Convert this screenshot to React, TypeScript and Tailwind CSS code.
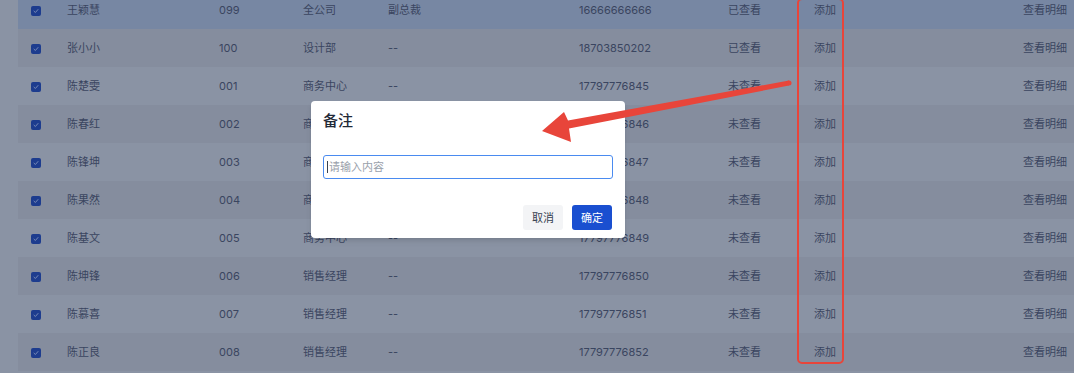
import React from 'react';

const ROWS = [
  { name: '王颖慧', code: '099', dept: '全公司', title: '副总裁', phone: '16666666666', status: '已查看' },
  { name: '张小小', code: '100', dept: '设计部', title: '--', phone: '18703850202', status: '已查看' },
  { name: '陈楚雯', code: '001', dept: '商务中心', title: '--', phone: '17797776845', status: '未查看' },
  { name: '陈春红', code: '002', dept: '商务中心', title: '--', phone: '17797776846', status: '未查看' },
  { name: '陈锋坤', code: '003', dept: '商务中心', title: '--', phone: '17797776847', status: '未查看' },
  { name: '陈果然', code: '004', dept: '商务中心', title: '--', phone: '17797776848', status: '未查看' },
  { name: '陈基文', code: '005', dept: '商务中心', title: '--', phone: '17797776849', status: '未查看' },
  { name: '陈坤锋', code: '006', dept: '销售经理', title: '--', phone: '17797776850', status: '未查看' },
  { name: '陈慕喜', code: '007', dept: '销售经理', title: '--', phone: '17797776851', status: '未查看' },
  { name: '陈正良', code: '008', dept: '销售经理', title: '--', phone: '17797776852', status: '未查看' },
];

const Check = () => (
  <span className="flex h-[10px] w-[10px] items-center justify-center rounded-[2px] bg-[#1d3c8e]">
    <svg width="6" height="6" viewBox="0 0 6 6" fill="none">
      <path d="M1 3.2 2.4 4.5 5 1.5" stroke="#8c9ac0" strokeWidth="0.8" strokeLinecap="round" strokeLinejoin="round" />
    </svg>
  </span>
);

const Row = ({ row, index }: { row: (typeof ROWS)[number]; index: number }) => {
  const bg = index === 0 ? 'bg-[#7787a3]' : index % 2 === 1 ? 'bg-[#858d9e]' : 'bg-[#8a93a4]';
  return (
    <div className={`flex h-[38px] items-center pl-[13px] pr-[7px] ${bg}`}>
      <div className="w-[36px] pt-px">
        <Check />
      </div>
      <div className="w-[152px]">{row.name}</div>
      <div className="w-[84px]">{row.code}</div>
      <div className="w-[85px]">{row.dept}</div>
      <div className="w-[191px]">{row.title}</div>
      <div className="w-[149px]">{row.phone}</div>
      <div className="w-[86px]">{row.status}</div>
      <div className="flex-1">添加</div>
      <div>查看明细</div>
    </div>
  );
};

export default function App() {
  return (
    <div
      className="relative h-[373px] w-[1074px] overflow-hidden bg-[#8a93a4] text-[11px] leading-[14px] text-[#3a4560]"
      style={{ fontFamily: 'Inter, "Noto Sans CJK SC", sans-serif' }}
    >
      <div className="ml-[18px] mt-[-9px]">
        {ROWS.map((row, i) => (
          <Row key={row.code} row={row} index={i} />
        ))}
      </div>

      {/* 备注 dialog */}
      <div className="absolute left-[311px] top-[101px] w-[314px] rounded-[4px] bg-white px-[12px] pt-[10px] pb-[8px] shadow-md">
        <div className="text-[15px] font-medium leading-[20px] text-[#1f2937]">备注</div>
        <div className="relative mt-[24px]">
          <input
            className="h-[24px] w-[290px] rounded-[3px] border border-[#4a8bf0] px-[5px] text-[11px] text-[#374151] outline-none placeholder:text-[#9aa1ab]"
            placeholder="请输入内容"
          />
          <span className="pointer-events-none absolute left-[4px] top-[6px] h-[12px] w-px bg-[#374151]" />
        </div>
        <div className="mt-[26px] flex justify-end gap-[9px] pr-px">
          <button className="h-[25px] w-[40px] rounded-[3px] bg-[#f3f4f6] text-[11px] text-[#374151]">取消</button>
          <button className="h-[25px] w-[40px] rounded-[3px] bg-[#1a4fd0] text-[11px] text-white">确定</button>
        </div>
      </div>

      {/* annotation */}
      <div className="pointer-events-none absolute left-[797px] top-[-2px] h-[366px] w-[47px] rounded-[5px] border-[2.5px] border-[#e8453a]" />
      <svg className="pointer-events-none absolute left-0 top-0" width="1074" height="373">
        <polygon
          points="542,131 564,112 568,120.5 789,80.5 789,85.5 569,128.5 571,142"
          fill="#e8453a"
        />
        <circle cx="789" cy="83" r="2.5" fill="#e8453a" />
      </svg>
    </div>
  );
}
